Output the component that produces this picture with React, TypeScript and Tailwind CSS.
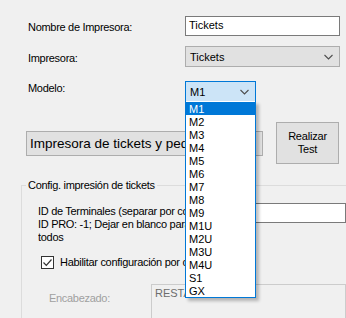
import React from 'react';

const models = ['M1', 'M2', 'M3', 'M4', 'M5', 'M6', 'M7', 'M8', 'M9', 'M1U', 'M2U', 'M3U', 'M4U', 'S1', 'GX'];

function Chevron() {
  return (
    <svg width="9" height="6" viewBox="0 0 9 6" className="shrink-0">
      <path d="M0.5 1 L4.5 5 L8.5 1" fill="none" stroke="#4d4d4d" strokeWidth="1.1" />
    </svg>
  );
}

export default function App() {
  return (
    <div
      className="relative w-[346px] h-[318px] overflow-hidden bg-[#f0f0f0] text-[11px] leading-[13px] text-black"
      style={{ fontFamily: '"Liberation Sans", Arial, sans-serif' }}
    >
      {/* form rows */}
      <div className="pt-[16px] pl-[28px]">
        <div className="flex h-[20px]">
          <div className="w-[157px] pt-[5px] tracking-[-0.3px]">Nombre de Impresora:</div>
          <div className="w-[155px] h-[20px] border border-[#7a7a7a] bg-white pl-[3px] pt-[2px]">Tickets</div>
        </div>

        <div className="flex h-[21px] mt-[10px]">
          <div className="w-[157px] pt-[6px] tracking-[-0.3px]">Impresora:</div>
          <div className="w-[155px] h-[21px] border border-[#adadad] bg-[#e1e1e1] pl-[4px] pt-[4px] pr-[6px] flex items-start justify-between">
            <span>Tickets</span>
            <span className="pt-[3px]"><Chevron /></span>
          </div>
        </div>

        <div className="flex h-[20px] mt-[14px]">
          <div className="w-[157px] pt-[1px] tracking-[-0.3px]">Modelo:</div>
          <div className="w-[71px] h-[21px] border border-[#0078d7] bg-[#cce4f7] pl-[4px] pt-[4px] pr-[6px] flex items-start justify-between">
            <span>M1</span>
            <span className="pt-[3px]"><Chevron /></span>
          </div>
        </div>
      </div>

      {/* panel + test button */}
      <div className="flex items-center mt-[21px] pl-[26px] pr-[7px] h-[42px]">
        <div className="flex-1 h-[25px] border border-[#adadad] bg-[#e1e1e1] pl-[3px] pt-[4px] text-[13.5px] leading-[16px]">
          <div className="w-[155px] overflow-hidden whitespace-nowrap">Impresora de tickets y pedidos</div>
        </div>
        <div className="ml-[13px] w-[63px] h-[42px] border border-[#adadad] bg-[#e1e1e1] flex flex-col items-center justify-center text-[11px] leading-[13px] tracking-[-0.2px]">
          <span>Realizar</span>
          <span>Test</span>
        </div>
      </div>

      {/* group box */}
      <div className="relative mt-[21px] ml-[21px] h-[200px] border-l border-t border-[#dcdcdc]">
        <div className="absolute -top-[7px] left-[4px] bg-[#f0f0f0] px-[2px] tracking-[-0.3px]">Config. impresión de tickets</div>

        <div className="flex pt-[19px] pl-[16px]">
          <div className="w-[222px]">
            <div className="w-[148px] overflow-hidden whitespace-nowrap tracking-[-0.3px]">
              <div>ID de Terminales (separar por coma).</div>
              <div>ID PRO: -1; Dejar en blanco para</div>
              <div>todos</div>
            </div>
          </div>
          <div className="w-[100px] h-[20px] -mt-[2px] border border-[#7a7a7a] bg-white" />
        </div>

        <div className="flex items-center pl-[19px] mt-[12px]">
          <div className="w-[13px] h-[13px] border border-[#333] bg-white flex items-center justify-center">
            <svg width="11" height="11" viewBox="0 0 11 11">
              <path d="M1.5 5.5 L4.3 8.3 L9.5 2.5" fill="none" stroke="#333" strokeWidth="1.2" />
            </svg>
          </div>
          <span className="ml-[6px] w-[125px] overflow-hidden tracking-[-0.3px] whitespace-nowrap">Habilitar configuración por cabecera</span>
        </div>

        <div className="flex pl-[27px] mt-[15px]">
          <div className="w-[102px] pt-[8px] text-[#a0a0a0] tracking-[-0.3px]">Encabezado:</div>
          <div className="flex-1 h-[60px] border border-[#cccccc] pl-[3px] pt-[2px] text-[#6d6d6d]">
            <div className="w-[31px] overflow-hidden whitespace-nowrap">RESTAURANTE</div>
          </div>
        </div>
      </div>

      {/* open dropdown list */}
      <div className="absolute left-[185px] top-[101px] w-[71px] h-[197px] bg-white border-x border-b border-[#0078d7] pt-[1px] shadow-[3px_3px_3px_rgba(0,0,0,0.25)]">
        {models.map((m, i) => (
          <div
            key={m}
            className={
              i === 0
                ? 'h-[13px] pl-[3px] pt-[1px] leading-[12px] bg-[#0078d7] text-white'
                : 'h-[13px] pl-[3px] pt-[1px] leading-[12px]'
            }
          >
            {m}
          </div>
        ))}
      </div>
    </div>
  );
}
